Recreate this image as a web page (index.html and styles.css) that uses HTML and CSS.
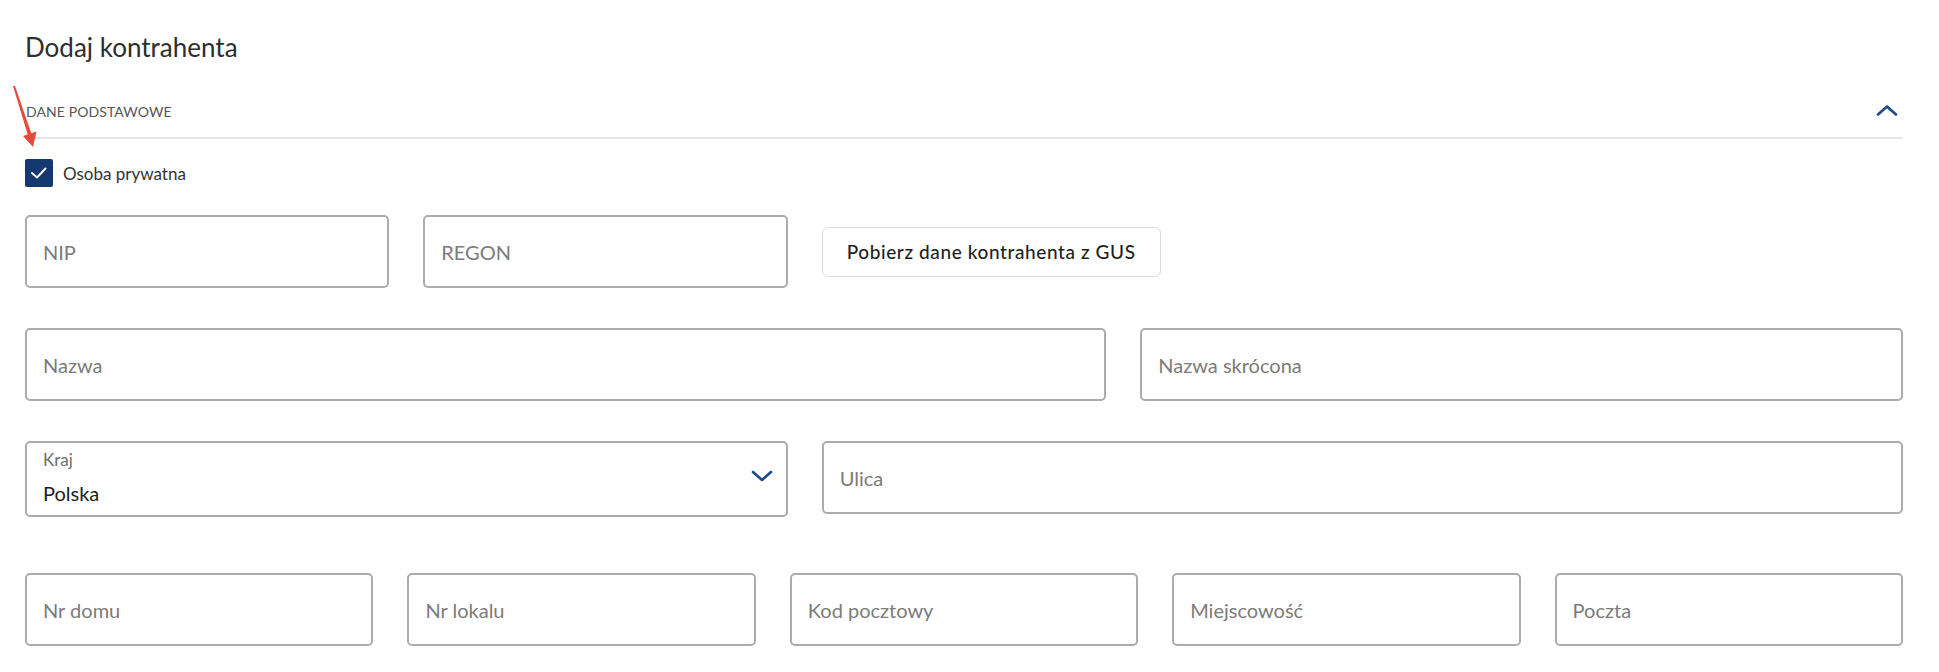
FILE: index.html
```html
<!DOCTYPE html>
<html lang="pl">
<head>
<meta charset="utf-8">
<title>Dodaj kontrahenta</title>
<link rel="stylesheet" href="styles.css">
</head>
<body>
<div class="page">
  <svg class="annot-arrow" width="50" height="160" viewBox="0 0 50 160" aria-hidden="true">
    <polygon points="13,86 15,86 31.5,134 28,135.5" fill="#e34a3a"/>
    <polygon points="33,147 23,136 36.5,131.5" fill="#e34a3a"/>
  </svg>

  <h1 class="title">Dodaj kontrahenta</h1>

  <section class="section">
    <div class="section-head">
      <span class="section-title">DANE PODSTAWOWE</span>
      <svg class="chev-up" width="22" height="12" viewBox="0 0 22 12" aria-hidden="true">
        <polyline points="2,10.5 11,2.5 20,10.5" fill="none" stroke="#1d4a8a" stroke-width="2.6" stroke-linecap="round" stroke-linejoin="round"/>
      </svg>
    </div>

    <label class="check">
      <span class="check-box">
        <svg width="28" height="28" viewBox="0 0 28 28" aria-hidden="true">
          <polyline points="7,14 12,18.5 20.5,9.5" fill="none" stroke="#ffffff" stroke-width="1.9" stroke-linecap="round" stroke-linejoin="round"/>
        </svg>
      </span>
      <span class="check-label">Osoba prywatna</span>
    </label>

    <div class="row row-first">
      <div class="pair">
        <div class="field"><span class="ph">NIP</span></div>
        <div class="field"><span class="ph">REGON</span></div>
      </div>
      <div class="btn-cell">
        <button class="btn" type="button">Pobierz dane kontrahenta z GUS</button>
      </div>
    </div>

    <div class="row row-name">
      <div class="field span-7"><span class="ph">Nazwa</span></div>
      <div class="field span-5"><span class="ph">Nazwa skrócona</span></div>
    </div>

    <div class="row row-addr">
      <div class="field select span-5">
        <div class="select-text">
          <span class="select-label">Kraj</span>
          <span class="select-value">Polska</span>
        </div>
        <svg class="chev-down" width="22" height="12" viewBox="0 0 22 12" aria-hidden="true">
          <polyline points="2,2 11,10 20,2" fill="none" stroke="#1d4a8a" stroke-width="2.6" stroke-linecap="round" stroke-linejoin="round"/>
        </svg>
      </div>
      <div class="field span-7"><span class="ph">Ulica</span></div>
    </div>

    <div class="row row-five">
      <div class="field"><span class="ph">Nr domu</span></div>
      <div class="field"><span class="ph">Nr lokalu</span></div>
      <div class="field"><span class="ph">Kod pocztowy</span></div>
      <div class="field"><span class="ph">Miejscowość</span></div>
      <div class="field"><span class="ph">Poczta</span></div>
    </div>
  </section>
</div>
</body>
</html>
```

FILE: styles.css
```css
* {
  box-sizing: border-box;
}

html, body {
  margin: 0;
  padding: 0;
  background: #ffffff;
}

body {
  font-family: Lato, "Open Sans", "Liberation Sans", sans-serif;
  color: #333333;
}

.page {
  position: relative;
  padding: 31px 36px 0 25px;
}

.annot-arrow {
  position: absolute;
  left: 0;
  top: 0;
}

.title {
  margin: 0;
  font-size: 26px;
  line-height: 32px;
  font-weight: 400;
  color: #2e2e2e;
}

.section-head {
  margin-top: 25px;
  height: 51px;
  display: flex;
  align-items: center;
  justify-content: space-between;
  border-bottom: 2px solid #e6e6e6;
  padding-bottom: 2px;
}

.section-title {
  font-size: 14px;
  color: #555555;
  padding-left: 1px;
  letter-spacing: 0.1px;
}

.chev-up {
  margin-right: 5px;
  margin-bottom: 3px;
}

.check {
  margin-top: 20px;
  display: flex;
  align-items: center;
  gap: 10px;
  height: 28px;
}

.check-box {
  width: 28px;
  height: 28px;
  background: #15396f;
  border-radius: 2px;
  display: block;
}

.check-box svg {
  display: block;
}

.check-label {
  font-size: 17px;
  color: #333333;
}

.row {
  display: grid;
  grid-template-columns: repeat(12, 1fr);
  column-gap: 34px;
}

.row-first {
  margin-top: 28px;
  align-items: center;
}

.row-name {
  margin-top: 40px;
}

.row-addr {
  margin-top: 40px;
  align-items: start;
}

.row-five {
  margin-top: 56px;
  grid-template-columns: repeat(5, 1fr);
}

.pair {
  grid-column: span 5;
  display: grid;
  grid-template-columns: 1fr 1fr;
  column-gap: 34px;
}

.btn-cell {
  grid-column: span 7;
}

.span-5 {
  grid-column: span 5;
}

.span-7 {
  grid-column: span 7;
}

.field {
  height: 73px;
  border: 2px solid #acacac;
  border-radius: 5px;
  background: #ffffff;
  display: flex;
  align-items: center;
  padding: 0 16px;
}

.ph {
  font-size: 20px;
  color: #7b7b7b;
}

.btn {
  height: 50px;
  width: 339px;
  padding: 0;
  border: 1px solid #dcdcdc;
  border-radius: 6px;
  background: #ffffff;
  font-family: Lato, "Open Sans", "Liberation Sans", sans-serif;
  font-size: 19px;
  font-weight: 500;
  letter-spacing: 0.6px;
  color: #1f1f1f;
}

.field.select {
  height: 76px;
  justify-content: space-between;
  align-items: stretch;
  padding: 7px 13px 10px 16px;
}

.select-text {
  display: flex;
  flex-direction: column;
}

.select-label {
  font-size: 17px;
  line-height: 20px;
  color: #6f6f6f;
}

.select-value {
  margin-top: 11px;
  font-size: 20px;
  line-height: 24px;
  color: #1c1c1c;
}

.chev-down {
  align-self: center;
  margin-top: -4px;
}
```
